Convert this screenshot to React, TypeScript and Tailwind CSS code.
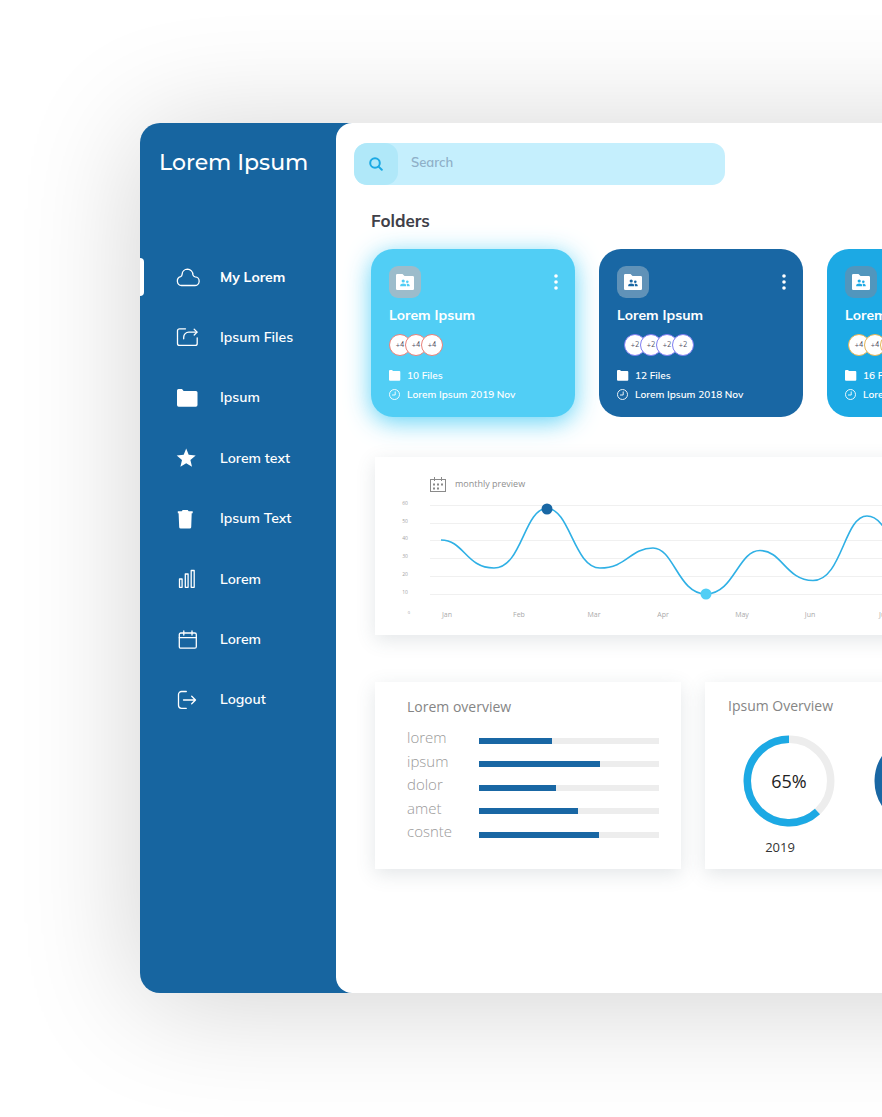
import type { ReactNode } from "react";

const navItems: { label: string; icon: ReactNode; active?: boolean }[] = [
  {
    label: "My Lorem",
    active: true,
    icon: (
      <path d="M5.500 20.500h13a4.300 4.300 0 0 0 .6-8.700c-1.300-.2-1.900-.8-2.200-1.900A5.500 5.500 0 0 0 11.500 4.200a5.500 5.500 0 0 0-5.400 5.200c-.1 1.300-.4 1.900-1.500 2.300A4.500 4.500 0 0 0 5.500 20.500Z" />
    ),
  },
  {
    label: "Ipsum Files",
    icon: (
      <>
        <path d="M9.500 3.800H3.500a2 2 0 0 0-2 2v12.600a2 2 0 0 0 2 2h15.700a2 2 0 0 0 2-2v-5.600" />
        <path d="M7.700 13.800v-1.600a5.100 5.100 0 0 1 5.100-5.100h8" />
        <path d="M18.200 4.200l2.900 2.900-2.900 2.900" />
      </>
    ),
  },
  {
    label: "Ipsum",
    icon: (
      <path
        fill="currentColor"
        stroke="none"
        d="M1 4.500A1.500 1.500 0 0 1 2.500 3H6l1.600 2H20a1.500 1.500 0 0 1 1.500 1.500V19a1.700 1.700 0 0 1-1.700 1.700H2.700A1.700 1.700 0 0 1 1 19Z"
      />
    ),
  },
  {
    label: "Lorem text",
    icon: (
      <path
        fill="currentColor"
        stroke="none"
        d="M10.200 2.500l2.500 6.300 7 .6-5.300 4.600 1.600 6.800-5.800-3.600-5.800 3.600L6 14 .7 9.400l7-.6Z"
      />
    ),
  },
  {
    label: "Ipsum Text",
    icon: (
      <path
        fill="currentColor"
        stroke="none"
        d="M1.800 4.300h3.900l1-1.400h5l1 1.400h4v1.900h-1l-.5 14a1.500 1.500 0 0 1-1.500 1.400h-9a1.500 1.500 0 0 1-1.500-1.400l-.6-14h-.8Z"
      />
    ),
  },
  {
    label: "Lorem",
    icon: (
      <>
        <rect x="3.500" y="12" width="2.600" height="8.300" />
        <rect x="9.300" y="7" width="2.800" height="13.300" />
        <rect x="15.200" y="3.500" width="3" height="16.800" />
      </>
    ),
  },
  {
    label: "Lorem",
    icon: (
      <>
        <rect x="3.300" y="5" width="17" height="15.200" rx="1.500" />
        <path d="M3.300 9.700h17M7.800 3v4M16 3v4" />
      </>
    ),
  },
  {
    label: "Logout",
    icon: (
      <>
        <path d="M10.300 3.500H5.500a3 3 0 0 0-3 3v10.800a3 3 0 0 0 3 3h4.800" />
        <path d="M7.500 12h12M15.700 8.200l3.800 3.800-3.800 3.800" />
      </>
    ),
  },
];

type Folder = {
  files: string;
  date: string;
  count: string;
  members: number;
  card: string;
  tile: string;
  people: string;
  badges: string;
  ring: string;
};

const folders: Folder[] = [
  {
    files: "10 Files",
    date: "Lorem Ipsum 2019 Nov",
    count: "+4",
    members: 3,
    card: "bg-[#51cef5] shadow-[0_5px_24px_rgba(81,206,245,0.9)]",
    tile: "bg-[#9cbccb]",
    people: "text-[#51cef5]",
    badges: "",
    ring: "border-[#ea8078]",
  },
  {
    files: "12 Files",
    date: "Lorem Ipsum 2018 Nov",
    count: "+2",
    members: 4,
    card: "bg-[#1967a4]",
    tile: "bg-[#6092b8]",
    people: "text-[#1967a4]",
    badges: "pl-[7px]",
    ring: "border-[#7f7df2]",
  },
  {
    files: "16 Files",
    date: "Lorem Ipsum 2017 Nov",
    count: "+4",
    members: 3,
    card: "bg-[#1ca9e4]",
    tile: "bg-[#5196bd]",
    people: "text-[#1ca9e4]",
    badges: "pl-[3px]",
    ring: "border-[#e5b455]",
  },
];

const gridLines = [
  { y: 9, label: "60" },
  { y: 27, label: "50" },
  { y: 44, label: "40" },
  { y: 62, label: "30" },
  { y: 80, label: "20" },
  { y: 98, label: "10" },
];

const months = [
  { x: 47, label: "Jan" },
  { x: 119, label: "Feb" },
  { x: 194, label: "Mar" },
  { x: 263, label: "Apr" },
  { x: 342, label: "May" },
  { x: 410, label: "Jun" },
  { x: 483, label: "Jul" },
];

const bars = [
  { label: "lorem", value: 40.5 },
  { label: "ipsum", value: 67 },
  { label: "dolor", value: 42.7 },
  { label: "amet", value: 55 },
  { label: "cosnte", value: 66.5 },
];

const panel = "bg-white shadow-[0_5px_18px_rgba(70,90,100,0.15)]";

function Sidebar() {
  return (
    <aside className="w-[196px] shrink-0 text-white">
      <h1 className="pt-6 pl-[19px] font-['Montserrat',sans-serif] text-[22px] leading-8 font-medium whitespace-nowrap">
        Lorem Ipsum
      </h1>
      <nav className="mt-[78px] flex h-[463px] flex-col justify-between">
        {navItems.map((item, i) => (
          <a
            key={i}
            href="#"
            aria-current={item.active ? "page" : undefined}
            className={`flex h-10 items-center font-['Mulish',sans-serif] text-[14px] ${
              item.active ? "font-bold" : "font-semibold"
            }`}
          >
            <span className={`h-[38px] w-1 rounded-r ${item.active ? "bg-white" : ""}`} />
            <svg
              viewBox="0 0 24 24"
              className="ml-8 size-6"
              fill="none"
              stroke="currentColor"
              strokeWidth="1.3"
              strokeLinecap="round"
              strokeLinejoin="round"
              aria-hidden="true"
            >
              {item.icon}
            </svg>
            <span className="ml-5">{item.label}</span>
          </a>
        ))}
      </nav>
    </aside>
  );
}

function Search() {
  return (
    <form
      className="flex h-[42px] w-[371px] overflow-hidden rounded-[13px] bg-[#c5effd]"
      onSubmit={(e) => e.preventDefault()}
    >
      <button
        type="submit"
        aria-label="Search"
        className="flex w-11 items-center justify-center rounded-[13px] bg-[#b0e8f9] text-[#1ca9e4]"
      >
        <svg viewBox="0 0 14 14" className="size-[14px]" fill="none" stroke="currentColor" strokeWidth="2" strokeLinecap="round">
          <circle cx="6" cy="6" r="4.800" />
          <path d="M9.600 9.600l3.200 3.200" />
        </svg>
      </button>
      <input
        type="text"
        aria-label="Search"
        placeholder="Search"
        className="min-w-0 flex-1 bg-transparent pb-[3px] pl-[13px] font-['Mulish',sans-serif] text-[13px] font-semibold text-[#5f7f9f] outline-none placeholder:text-[#8fb0c8]"
      />
    </form>
  );
}

function FolderCard({ folder }: { folder: Folder }) {
  return (
    <article
      className={`h-[168px] w-[204px] shrink-0 rounded-[22px] px-[18px] pt-[17px] font-['Mulish',sans-serif] text-white ${folder.card}`}
    >
      <div className="flex items-center justify-between">
        <span className={`flex size-8 items-center justify-center rounded-[9px] ${folder.tile}`}>
          <svg viewBox="0 0 18 16" className={`h-4 w-[18px] ${folder.people}`} aria-hidden="true">
            <path
              fill="white"
              d="M0 1.300A1.300 1.300 0 0 1 1.300 0h5.200l2 2h8.200A1.300 1.300 0 0 1 18 3.300v11.400a1.300 1.300 0 0 1-1.300 1.300H1.300A1.300 1.300 0 0 1 0 14.700Z"
            />
            <g fill="currentColor">
              <circle cx="7.200" cy="7" r="1.600" />
              <circle cx="11.300" cy="7.800" r="1.300" />
              <path d="M4.200 12.300v-.9c0-1.200 1.600-1.900 3-1.900s3 .7 3 1.900v.9Z" />
              <path d="M11 12.300v-1c0-.6-.2-1-.6-1.400 1.600-.3 3.300.4 3.300 1.500v.9Z" />
            </g>
          </svg>
        </span>
        <button type="button" aria-label="More" className="-mr-[2px] flex w-[6px] justify-center">
          <svg viewBox="0 0 4 16" className="h-4 w-1" fill="currentColor">
            <circle cx="2" cy="2" r="1.800" />
            <circle cx="2" cy="8" r="1.800" />
            <circle cx="2" cy="14" r="1.800" />
          </svg>
        </button>
      </div>
      <h3 className="mt-[7px] text-[14px] leading-5 font-bold">Lorem Ipsum</h3>
      <div className={`mt-[9px] flex ${folder.badges}`}>
        {Array.from({ length: folder.members }, (_, i) => (
          <span
            key={i}
            className={`flex size-[22px] items-center justify-center rounded-full border bg-white text-[7px] text-[#50505f] not-first:-ml-[6px] ${folder.ring}`}
          >
            {folder.count}
          </span>
        ))}
      </div>
      <p className="mt-[10px] flex items-center text-[10px] leading-[19px] font-semibold">
        <svg viewBox="0 0 12 12" className="mr-[6px] size-3" fill="currentColor" aria-hidden="true">
          <path d="M0 1a1 1 0 0 1 1-1h2l1 1h6.300a1 1 0 0 1 1 1v7.800a1 1 0 0 1-1 1H1a1 1 0 0 1-1-1Z" />
        </svg>
        {folder.files}
      </p>
      <p className="flex items-center text-[10px] leading-[19px] font-semibold">
        <svg viewBox="0 0 12 12" className="mr-[6px] size-3" fill="none" stroke="currentColor" aria-hidden="true">
          <circle cx="5.500" cy="5.500" r="5" strokeWidth=".9" />
          <path d="M6.200 2.500v3.500H3" strokeWidth=".9" />
        </svg>
        {folder.date}
      </p>
    </article>
  );
}

function MonthlyPreview() {
  return (
    <section className={`mt-10 ml-1 h-[178px] pt-[19px] pl-[25px] font-['Open_Sans',sans-serif] ${panel}`}>
      <header className="ml-[30px] flex h-5 items-start gap-[9px]">
        <svg viewBox="0 0 16 16" className="mt-[1px] size-4" fill="none" stroke="#8a8a8a" aria-hidden="true">
          <rect x=".5" y="2.500" width="15" height="12" />
          <path d="M4.500 0v4M11.500 0v4" />
          <path strokeWidth="2" strokeDasharray="2 2" d="M3 7.500h10M3 11.500h6" />
        </svg>
        <h2 className="text-[9px] leading-4 text-[#8f8f8f]">monthly preview</h2>
      </header>
      <svg viewBox="0 0 660 128" className="h-32 w-[660px]" role="img" aria-label="monthly preview">
        {gridLines.map((line) => (
          <g key={line.label}>
            <path d={`M30 ${line.y + 0.5}H660`} stroke="#f0f0f0" strokeWidth="1.200" />
            <text x="5" y={line.y} textAnchor="middle" fontSize="5" fill="#a3a3a3">
              {line.label}
            </text>
          </g>
        ))}
        <text x="9" y="118" textAnchor="middle" fontSize="4" fill="#a3a3a3">
          0
        </text>
        <path
          d="M41 44C64 44 66 72 94 72C122 72 124 12.500 147 12.500C170 12.500 174 72 200 72C227 72 230 52 253 52C274 52 278 98 306 98C334 98 338 54.500 360 54.500C382 54.500 386 84.500 413 84.500C442 84.500 444 20 467 20C490 20 494 72 520 72"
          fill="none"
          stroke="#2fb0e5"
          strokeWidth="1.600"
        />
        <circle cx="147" cy="13" r="5.500" fill="#1967a4" />
        <circle cx="306" cy="98" r="5.500" fill="#51cef5" />
        {months.map((month) => (
          <text key={month.label} x={month.x} y="121" textAnchor="middle" fontSize="7" fill="#a9a9a9">
            {month.label}
          </text>
        ))}
      </svg>
    </section>
  );
}

function LoremOverview() {
  return (
    <section className={`h-[187px] w-[306px] shrink-0 px-8 pt-[15px] ${panel}`}>
      <h2 className="text-[14px] leading-5 text-[#858585]">Lorem overview</h2>
      <ul className="mt-[9px] flex h-[117px] flex-col justify-between text-[15px] font-light text-[#999]">
        {bars.map((bar) => (
          <li key={bar.label} className="flex items-center leading-[23px]">
            <span className="w-[72px] shrink-0">{bar.label}</span>
            <span className="mt-[6px] -mr-[10px] h-[6px] flex-1 bg-[#ededed]">
              <span className="block h-full bg-[#1967a4]" style={{ width: `${bar.value}%` }} />
            </span>
          </li>
        ))}
      </ul>
    </section>
  );
}

function Donut({ value, year, color }: { value: string; year: string; color: string }) {
  return (
    <figure className="w-[92px] shrink-0">
      <svg viewBox="0 0 92 92" className="size-[92px]" role="img" aria-label={`${value} in ${year}`}>
        <circle cx="46" cy="46" r="41.700" fill="none" stroke="#ededed" strokeWidth="7.500" />
        <circle
          cx="46"
          cy="46"
          r="41.700"
          fill="none"
          strokeWidth="7.500"
          pathLength="360"
          strokeDasharray="223 137"
          transform="rotate(47 46 46)"
          className={color}
        />
        <text x="46" y="53" textAnchor="middle" fontSize="18" fill="#222222">
          {value}
        </text>
      </svg>
      <figcaption className="mt-3 pr-[18px] text-center text-[13px] leading-4 text-[#333]">{year}</figcaption>
    </figure>
  );
}

export default function App() {
  return (
    <div className="min-h-screen overflow-hidden bg-white py-[123px] pl-[140px]">
      <div className="-mr-40 flex min-h-[870px] rounded-[20px] bg-[#1765a0] shadow-[0_8px_120px_rgba(0,0,0,0.185)]">
        <Sidebar />
        <main className="min-w-0 flex-1 rounded-[16px] bg-white pt-5 pl-[18px]">
          <Search />
          <div className="pl-[17px]">
            <h2 className="mt-6 font-['Mulish',sans-serif] text-[17px] leading-6 font-bold text-[#404048]">
              Folders
            </h2>
            <div className="mt-4 flex gap-6">
              {folders.map((folder) => (
                <FolderCard key={folder.files} folder={folder} />
              ))}
            </div>
            <MonthlyPreview />
            <div className="mt-[47px] ml-1 flex gap-6 font-['Open_Sans',sans-serif]">
              <LoremOverview />
              <section className={`h-[187px] flex-1 pt-[14px] pl-[23px] ${panel}`}>
                <h2 className="text-[14px] leading-5 text-[#858585]">Ipsum Overview</h2>
                <div className="mt-[19px] ml-[15px] flex gap-[39px]">
                  <Donut value="65%" year="2019" color="stroke-[#1ca9e4]" />
                  <Donut value="65%" year="2018" color="stroke-[#1967a4]" />
                </div>
              </section>
            </div>
          </div>
        </main>
      </div>
    </div>
  );
}
